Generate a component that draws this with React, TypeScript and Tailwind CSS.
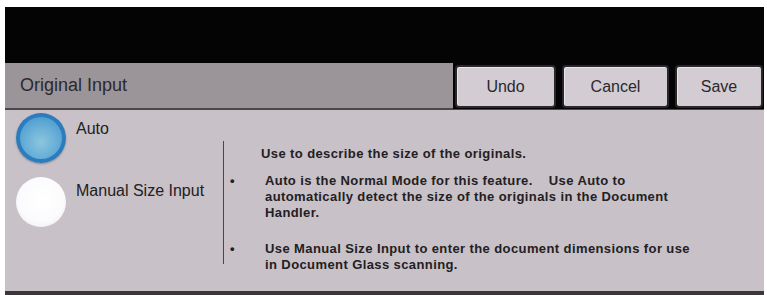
import React from 'react';

function Radio({ on }: { on: boolean }) {
  if (on) {
    return (
      <div className="w-[50px] h-[50px] rounded-full p-[4px] bg-[radial-gradient(circle_at_50%_50%,#3a8cc6_0%,#2a7bbd_70%,#1b5f9c_100%)] shadow-[0_1px_2px_rgba(0,0,0,0.3)]">
        <div className="w-full h-full rounded-full bg-[radial-gradient(circle_at_50%_60%,#8cc6de_0%,#62abd6_55%,#3d8fca_100%)]" />
      </div>
    );
  }
  return (
    <div className="w-[50px] h-[50px] rounded-full bg-[radial-gradient(circle_at_50%_45%,#ffffff_0%,#fbfbfd_60%,#e6e3ea_100%)]" />
  );
}

function Btn({ label, w }: { label: string; w: string }) {
  return (
    <button
      className={`${w} h-[43px] rounded-[4px] border-2 border-[#2a262a] bg-[#d3cdd3] text-[16px] text-[#2b282b] shadow-[inset_1px_1px_0_#ebe6eb]`}
    >
      {label}
    </button>
  );
}

export default function App() {
  return (
    <div className="w-[767px] h-[295px] bg-white pt-[7px] pl-[5px] pr-[3px] font-['Liberation_Sans',Arial,sans-serif]">
      <div className="flex flex-col h-[288px] border-b-[4px] border-[#3a363a]">
        {/* top black area */}
        <div className="h-[56px] bg-[#040404]" />

        {/* header bar */}
        <div className="h-[47px] flex items-center bg-[#9b959a] border-b-2 border-[#4a464a]">
          <div className="flex-1 pl-[15px] text-[18px] text-[#2b282b]">Original Input</div>
          <div className="flex items-center gap-[6px] self-start pt-[2px] pb-[1px] bg-[#040404] pl-[2px] pr-[1px]">
            <Btn label="Undo" w="w-[101px]" />
            <Btn label="Cancel" w="w-[107px]" />
            <Btn label="Save" w="w-[88px]" />
          </div>
        </div>

        {/* body */}
        <div className="flex-1 flex bg-[#c8c1c7] text-[#222022]">
          <div className="w-[218px] pl-[11px] pt-[3px] flex flex-col gap-[14px]">
            <div className="flex items-start gap-[10px]">
              <Radio on />
              <span className="text-[16px] pt-[4px]">Auto</span>
            </div>
            <div className="flex items-start gap-[10px]">
              <Radio on={false} />
              <span className="text-[16px] pt-[2px]">Manual Size Input</span>
            </div>
          </div>

          <div className="mt-[31px] h-[123px] w-px bg-[#4a464a]" />

          <div className="flex-1 pt-[36px] text-[13px] leading-[16px] font-semibold tracking-[0.4px]">
            <div className="pl-[37px]">Use to describe the size of the originals.</div>
            <div className="mt-[11px] flex">
              <span className="w-[41px] pl-[6px]">•</span>
              <span className="w-[480px]">
                Auto is the Normal Mode for this feature.&nbsp;&nbsp;&nbsp; Use Auto to
                <br />
                automatically detect the size of the originals in the Document
                <br />
                Handler.
              </span>
            </div>
            <div className="mt-[20px] flex">
              <span className="w-[41px] pl-[6px]">•</span>
              <span className="w-[480px]">
                Use Manual Size Input to enter the document dimensions for use
                <br />
                in Document Glass scanning.
              </span>
            </div>
          </div>
        </div>
      </div>
    </div>
  );
}
